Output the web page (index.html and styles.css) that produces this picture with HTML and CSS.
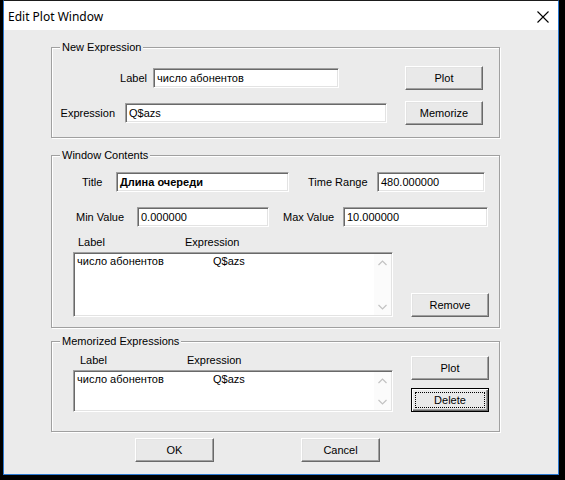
FILE: index.html
```html
<!DOCTYPE html>
<html>
<head>
<meta charset="utf-8">
<title>Edit Plot Window</title>
<link rel="stylesheet" href="styles.css">
</head>
<body>
<div class="window">
  <div class="titlebar">
    <span class="title">Edit Plot Window</span>
    <svg class="close" width="12" height="12" viewBox="0 0 12 12"><path d="M0.5 0.5 L11.5 11.5 M11.5 0.5 L0.5 11.5" stroke="#000" stroke-width="1.1" fill="none"/></svg>
  </div>
  <div class="content">
    <div class="group g1">
      <span class="legend">New Expression</span>
      <div class="row r1">
        <span class="lbl right w95">Label</span>
        <div class="edit ml6 w186">число абонентов</div>
        <div class="btn ml66">Plot</div>
      </div>
      <div class="row r2">
        <span class="lbl right w63">Expression</span>
        <div class="edit ml10 w262">Q$azs</div>
        <div class="btn ml18">Memorize</div>
      </div>
    </div>

    <div class="group g2">
      <span class="legend">Window Contents</span>
      <div class="row f1">
        <span class="lbl w34">Title</span>
        <div class="edit w173 bold">Длина очереди</div>
        <span class="lbl ml19 w69">Time Range</span>
        <div class="edit w108">480.000000</div>
      </div>
      <div class="row f2">
        <span class="lbl w61">Min Value</span>
        <div class="edit w132">0.000000</div>
        <span class="lbl ml14 w60">Max Value</span>
        <div class="edit w145">10.000000</div>
      </div>
      <div class="hdr h2">
        <span class="hcol">Label</span><span>Expression</span>
      </div>
      <div class="row f4">
        <div class="list tall">
          <div class="list-body">
            <div class="item"><span class="icol">число абонентов</span><span>Q$azs</span></div>
          </div>
          <div class="scroll">
            <svg width="9" height="6" viewBox="0 0 9 6"><polyline points="0.5,5 4.5,1 8.5,5" fill="none" stroke="#c2c2c2" stroke-width="1.2"/></svg>
            <svg width="9" height="6" viewBox="0 0 9 6"><polyline points="0.5,1 4.5,5 8.5,1" fill="none" stroke="#c2c2c2" stroke-width="1.2"/></svg>
          </div>
        </div>
        <div class="btn ml18 bottom">Remove</div>
      </div>
    </div>

    <div class="group g3">
      <span class="legend">Memorized Expressions</span>
      <div class="row m1">
        <div class="col">
          <div class="hdr h3">
            <span class="hcol">Label</span><span>Expression</span>
          </div>
          <div class="list short">
            <div class="list-body">
              <div class="item"><span class="icol">число абонентов</span><span>Q$azs</span></div>
            </div>
            <div class="scroll">
              <svg width="9" height="6" viewBox="0 0 9 6"><polyline points="0.5,5 4.5,1 8.5,5" fill="none" stroke="#c2c2c2" stroke-width="1.2"/></svg>
              <svg width="9" height="6" viewBox="0 0 9 6"><polyline points="0.5,1 4.5,5 8.5,1" fill="none" stroke="#c2c2c2" stroke-width="1.2"/></svg>
            </div>
          </div>
        </div>
        <div class="btncol ml18">
          <div class="btn">Plot</div>
          <div class="btn default"><span class="focus">Delete</span></div>
        </div>
      </div>
    </div>

    <div class="footer">
      <div class="btn wide">OK</div>
      <div class="btn wide ml87">Cancel</div>
    </div>
  </div>
</div>
</body>
</html>
```

FILE: styles.css
```css
* { box-sizing: border-box; }

body {
  margin: 0;
  width: 565px;
  height: 480px;
  overflow: hidden;
  background: #000;
}

.window {
  margin-left: 3px;
  width: 556px;
  height: 475px;
  border: 1px solid #2b78d0;
  border-top-color: #1b1b1b;
  background: #ebebeb;
  font-family: "Liberation Sans", Arial, sans-serif;
  font-size: 11px;
  color: #000;
}

.titlebar {
  height: 29px;
  background: #fff;
  display: flex;
  align-items: center;
  justify-content: space-between;
  padding: 0 9px 0 4px;
}

.title {
  font-family: "Noto Sans", "Open Sans", sans-serif;
  font-size: 12px;
  padding-top: 2px;
}

.close { margin-top: 2px; }

.content {
  padding: 17px 0 0 47px;
}

.group {
  position: relative;
  width: 449px;
  border: 1px solid #a0a0a0;
  box-shadow: inset 1px 1px 0 #fff, 1px 1px 0 #fff;
}

.legend {
  position: absolute;
  top: -7px;
  left: 8px;
  padding: 0 2px;
  background: #ebebeb;
  line-height: 13px;
}

.g1 { height: 91px; padding-top: 18px; }
.g2 { height: 173px; margin-top: 17px; padding-top: 16px; }
.g3 { height: 91px; margin-top: 13px; padding-top: 12px; }

.row { display: flex; align-items: center; }
.r1, .r2 { height: 24px; }
.r2 { margin-top: 11px; }

.f1 { height: 20px; padding-left: 30px; }
.f2 { height: 20px; padding-left: 24px; margin-top: 15px; }
.f4 { padding-left: 21px; align-items: flex-end; }

.m1 { padding-left: 21px; align-items: flex-start; }

.lbl { line-height: 13px; white-space: nowrap; flex: none; }
.right { text-align: right; }

.w34 { width: 34px; }
.w60 { width: 60px; }
.w61 { width: 61px; }
.w63 { width: 63px; }
.w69 { width: 69px; }
.w95 { width: 95px; }
.w108 { width: 108px; }
.w132 { width: 132px; }
.w145 { width: 145px; }
.w173 { width: 173px; }
.w186 { width: 186px; }
.w262 { width: 262px; }

.ml6 { margin-left: 6px; }
.ml10 { margin-left: 10px; }
.ml14 { margin-left: 14px; }
.ml18 { margin-left: 18px; }
.ml19 { margin-left: 19px; }
.ml66 { margin-left: 66px; }
.ml87 { margin-left: 87px; }

.edit {
  flex: none;
  height: 20px;
  background: #fff;
  border: 1px solid;
  border-color: #a0a0a0 #fff #fff #a0a0a0;
  box-shadow: inset 1px 1px 0 #696969, inset -1px -1px 0 #e3e3e3;
  padding: 0 3px;
  line-height: 18px;
  white-space: nowrap;
  overflow: hidden;
}

.bold { font-weight: bold; }

.btn {
  flex: none;
  width: 78px;
  height: 24px;
  border: 1px solid;
  border-color: #fff #696969 #696969 #fff;
  box-shadow: inset -1px -1px 0 #a0a0a0, inset 1px 1px 0 #e3e3e3;
  background: #e9e9e9;
  display: flex;
  align-items: center;
  justify-content: center;
  line-height: 13px;
}

.btn.default {
  border: 1px solid #000;
  box-shadow: inset 1px 1px 0 #fff, inset -1px -1px 0 #696969, inset -2px -2px 0 #a0a0a0;
  margin-top: 8px;
}

.focus {
  width: 70px;
  height: 16px;
  border: 1px dotted #000;
  display: flex;
  align-items: center;
  justify-content: center;
}

.wide { width: 79px; }

.hdr { display: flex; height: 13px; line-height: 13px; margin-bottom: 3px; }
.h2 { margin-top: 9px; padding-left: 26px; }
.h3 { padding-left: 7px; }
.hcol { width: 107px; }

.list {
  flex: none;
  width: 320px;
  display: flex;
  background: #fff;
  border: 1px solid;
  border-color: #a0a0a0 #fff #fff #a0a0a0;
  box-shadow: inset 1px 1px 0 #696969, inset -1px -1px 0 #e3e3e3;
}
.list.tall { height: 65px; }
.list.short { height: 42px; }

.list-body { flex: 1; padding: 2px 3px; }
.item { display: flex; line-height: 13px; white-space: nowrap; }
.icol { width: 136px; }

.scroll {
  width: 17px;
  margin: 1px 1px 1px 0;
  background: #fbfbfb;
  display: flex;
  flex-direction: column;
  justify-content: space-between;
  align-items: center;
  padding: 6px 0 5px;
}

.btncol { display: flex; flex-direction: column; margin-top: 2px; }

.footer { display: flex; margin-top: 6px; padding-left: 84px; }
```
